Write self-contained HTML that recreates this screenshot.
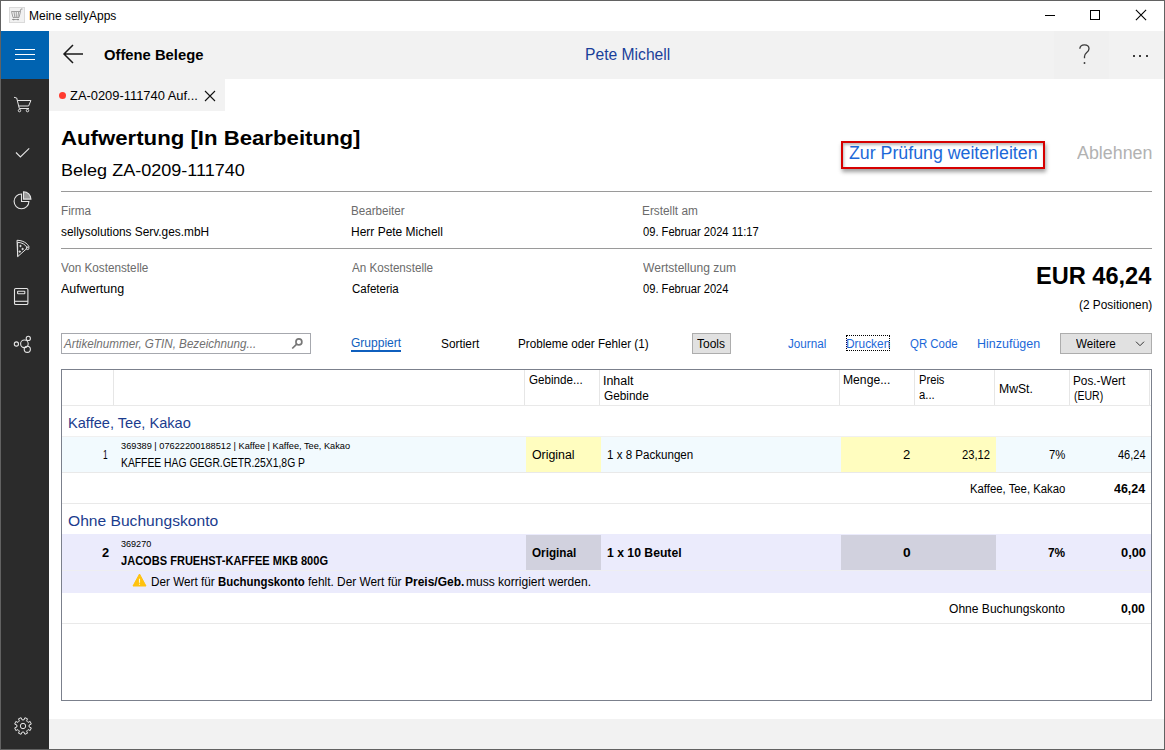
<!DOCTYPE html>
<html lang="de">
<head>
<meta charset="utf-8">
<title>Meine sellyApps</title>
<style>
*{box-sizing:border-box;margin:0;padding:0}
html,body{width:1165px;height:750px;overflow:hidden;background:#fff}
body{font-family:"Liberation Sans",sans-serif;color:#000;position:relative;font-size:12px}
.a{position:absolute;white-space:nowrap;line-height:1;transform-origin:0 0}
.x{position:absolute}
svg{position:absolute;overflow:visible}
.hl{position:absolute;height:1px;left:62px;width:1089px;background:#e9e9e9}
.vl{position:absolute;width:1px;top:370px;height:35px;background:#e6e6e6}
</style>
</head>
<body>
<!-- title bar -->
<div class="x" style="left:9px;top:7px;width:16px;height:16px;background:#f1f1f1;border:1px solid #dadada"></div>
<svg style="left:9px;top:7px" width="16" height="16" viewBox="0 0 16 16" fill="none" stroke="#8a8a8a" stroke-width="1">
 <path d="M2.5 4.5h9l-1.5 6h-6zM11 4.5l1-2.5h1.5M5 5l.8 5M7.3 5v5M9.6 5l-.6 5" stroke-width=".8"/>
 <path d="M3 12.5h7" stroke-width=".8"/><circle cx="4.7" cy="12.6" r=".8" fill="#8a8a8a" stroke="none"/><circle cx="9" cy="12.6" r=".8" fill="#8a8a8a" stroke="none"/>
</svg>
<!-- window controls -->
<div class="x" style="left:1045px;top:15px;width:10px;height:1px;background:#000"></div>
<div class="x" style="left:1090px;top:10px;width:10px;height:10px;border:1px solid #000"></div>
<svg style="left:1135px;top:9px" width="12" height="12" viewBox="0 0 12 12" stroke="#000" stroke-width="1.1" fill="none"><path d="M.9 .9l10.2 10.2M11.1 .9L.9 11.1"/></svg>

<!-- header bar -->
<div class="x" style="left:49px;top:31px;width:1115px;height:48px;background:#f2f2f2"></div>
<div class="x" style="left:1054px;top:31px;width:55px;height:48px;background:#f0f0f0"></div>
<!-- back arrow -->
<svg style="left:62px;top:44px" width="24" height="20" viewBox="0 0 24 20" stroke="#1a1a1a" stroke-width="1.5" fill="none" stroke-linejoin="miter"><path d="M21 10H2.5M11 1L2 10l9 9"/></svg>
<!-- ? and ... -->
<svg style="left:1078px;top:43px" width="14" height="22" viewBox="0 0 14 22" fill="none" stroke="#3a3a3a" stroke-width="1.3"><path d="M1.8 5.8C2 3.2 3.8 1.8 6.4 1.8c2.800 0 4.600 1.600 4.600 3.900 0 2-1.100 3-2.500 4.100C7.200 10.900 6.500 11.800 6.500 13.600v1.600"/><circle cx="6.500" cy="20" r=".95" fill="#3a3a3a" stroke="none"/></svg>
<div class="x" style="left:1132.7px;top:55.4px;width:2.1px;height:2.1px;border-radius:50%;background:#000"></div>
<div class="x" style="left:1139.4px;top:55.4px;width:2.1px;height:2.1px;border-radius:50%;background:#000"></div>
<div class="x" style="left:1145.9px;top:55.4px;width:2.1px;height:2.1px;border-radius:50%;background:#000"></div>

<!-- sidebar -->
<div class="x" style="left:1px;top:31px;width:48px;height:718px;background:#2b2b2b"></div>
<div class="x" style="left:1px;top:31px;width:48px;height:48px;background:#0063b1"></div>
<div class="x" style="left:15px;top:49px;width:20px;height:1px;background:#fff"></div>
<div class="x" style="left:15px;top:54px;width:20px;height:1px;background:#fff"></div>
<div class="x" style="left:15px;top:59px;width:20px;height:1px;background:#fff"></div>
<!-- cart -->
<svg style="left:13px;top:95px" width="20" height="18" viewBox="0 0 20 18" fill="none" stroke="#e4e4e4" stroke-width="1"><path d="M1 2.300l2.700 .7 2.600 10.500h9.700M4.500 5.500h13.400l-2.300 5.500H5.800"/><circle cx="6.500" cy="15.600" r="1.200"/><circle cx="14.500" cy="15.600" r="1.200"/></svg>
<!-- check -->
<svg style="left:14px;top:146px" width="18" height="14" viewBox="0 0 18 14" fill="none" stroke="#e4e4e4" stroke-width="1.100"><path d="M2 6.500l4.400 4.500L15.200 2.400"/></svg>
<!-- pie -->
<svg style="left:13px;top:190px" width="20" height="20" viewBox="0 0 20 20" fill="none" stroke="#e4e4e4" stroke-width="1.100"><path d="M8.500 4A7.400 7.400 0 1 0 15.900 11.500H8.500z"/><path d="M10.500 1.700a7.400 7.400 0 0 1 7.400 7.400h-7.400z" fill="#9a9a9a"/></svg>
<!-- pizza -->
<svg style="left:14px;top:238px" width="18" height="22" viewBox="0 0 18 22" fill="none" stroke="#e4e4e4" stroke-width="1"><path d="M3 2.300C8.500 2.300 13.500 5 15.300 9.300M3.600 4.300c4.400 .2 8 2.300 9.800 5.700L3.700 18.600zM3 2.300l.7 16.300"/><circle cx="6.500" cy="8" r=".7" fill="#e4e4e4"/><circle cx="8.600" cy="11" r=".7" fill="#e4e4e4"/><circle cx="5.800" cy="13.600" r=".7" fill="#e4e4e4"/><circle cx="13.600" cy="10.300" r="1.300"/></svg>
<!-- book -->
<svg style="left:13px;top:287px" width="18" height="20" viewBox="0 0 18 20" fill="none" stroke="#e4e4e4" stroke-width="1.100"><rect x="1.500" y="1.500" width="13.400" height="16" rx="1.300"/><path d="M1.500 14.300h13.400"/><rect x="4.600" y="4.300" width="7.200" height="2.500" rx=".5"/></svg>
<!-- nodes -->
<svg style="left:13px;top:335px" width="20" height="20" viewBox="0 0 20 20" fill="none" stroke="#e4e4e4" stroke-width="1.100"><circle cx="3.400" cy="9" r="2.100"/><circle cx="11.400" cy="8.800" r="3.800"/><circle cx="15.300" cy="3.400" r="2.100"/><circle cx="14.300" cy="14.300" r="3.100"/></svg>
<!-- gear -->
<svg style="left:12.5px;top:716.4px" width="20" height="20" viewBox="-10 -10 20 20" fill="none" stroke="#e4e4e4" stroke-width="1"><path d="M6.12 1.00L8.29 1.88L7.19 4.53L5.04 3.62L3.62 5.04L4.53 7.19L1.88 8.29L1.00 6.12L-1.00 6.12L-1.88 8.29L-4.53 7.19L-3.62 5.04L-5.04 3.62L-7.19 4.53L-8.29 1.88L-6.12 1.00L-6.12 -1.00L-8.29 -1.88L-7.19 -4.53L-5.04 -3.62L-3.62 -5.04L-4.53 -7.19L-1.88 -8.29L-1.00 -6.12L1.00 -6.12L1.88 -8.29L4.53 -7.19L3.62 -5.04L5.04 -3.62L7.19 -4.53L8.29 -1.88L6.12 -1.00z" stroke-linejoin="round"/><circle r="2.700"/></svg>

<!-- tab -->
<div class="x" style="left:49px;top:79px;width:176px;height:32px;background:#f2f2f2"></div>
<div class="x" style="left:59px;top:92px;width:7px;height:7px;border-radius:50%;background:#ff3b30"></div>
<svg style="left:204px;top:90px" width="12" height="12" viewBox="0 0 12 12" stroke="#111" stroke-width="1.100" fill="none"><path d="M1 1l10 10M11 1L1 11"/></svg>

<!-- red highlight box -->
<div class="x" style="left:841px;top:141px;width:204px;height:28px;border:2px solid #d60000;box-shadow:1px 3px 4px rgba(0,0,0,.38), inset 1px 2px 3px rgba(0,0,0,.28)"></div>

<!-- separator lines -->
<div class="x" style="left:61px;top:191px;width:1091px;height:1px;background:#9a9a9a"></div>
<div class="x" style="left:61px;top:248px;width:1091px;height:1px;background:#9a9a9a"></div>

<!-- toolbar -->
<div class="x" style="left:61px;top:333px;width:250px;height:21px;border:1px solid #a6a8ae;background:#fff"></div>
<svg style="left:290px;top:337px" width="14" height="14" viewBox="0 0 14 14" fill="none" stroke="#777" stroke-width="1.700"><circle cx="8.900" cy="4.900" r="2.950"/><path d="M6.700 7.100L2.200 11.500" stroke-width="1.700"/></svg>
<div class="x" style="left:351px;top:350px;width:50px;height:2px;background:#0f5fbe"></div>
<div class="x" style="left:692px;top:333px;width:39px;height:21px;border:1px solid #adadad;background:#e1e1e1"></div>
<div class="x" style="left:846px;top:335px;width:44px;height:16px;border:1px dotted #000"></div>
<div class="x" style="left:1060px;top:333px;width:92px;height:21px;border:1px solid #adadad;background:#e1e1e1"></div>
<svg style="left:1135px;top:340px" width="10" height="8" viewBox="0 0 10 8" fill="none" stroke="#333" stroke-width="1"><path d="M1 1.700l4 4 4-4"/></svg>

<!-- table -->
<div class="x" style="left:61px;top:369px;width:1091px;height:332px;border:1px solid #7b808c;background:#fff"></div>
<div class="vl" style="left:113px"></div><div class="vl" style="left:524px"></div><div class="vl" style="left:599px"></div>
<div class="vl" style="left:839px"></div><div class="vl" style="left:914px"></div><div class="vl" style="left:994px"></div>
<div class="vl" style="left:1069px"></div><div class="vl" style="left:1149px"></div>
<div class="hl" style="top:405px"></div>
<div class="hl" style="top:436px;background:#f0f0f0"></div>
<div class="x" style="left:62px;top:437px;width:1089px;height:35px;background:#f2fafe"></div>
<div class="x" style="left:526px;top:437px;width:75px;height:35px;background:#fffdbf"></div>
<div class="x" style="left:841px;top:437px;width:155px;height:35px;background:#fffdbf"></div>
<div class="hl" style="top:472px"></div>
<div class="hl" style="top:503px"></div>
<div class="x" style="left:62px;top:534px;width:1089px;height:59px;background:#ebebfc"></div>
<div class="x" style="left:62px;top:570px;width:1089px;height:1px;background:#eeeef1"></div>
<div class="x" style="left:526px;top:535px;width:75px;height:35px;background:#d1d1de"></div>
<div class="x" style="left:841px;top:535px;width:155px;height:35px;background:#d1d1de"></div>
<div class="hl" style="top:623px"></div>
<!-- warning icon -->
<svg style="left:132px;top:573px" width="15" height="14" viewBox="0 0 15 14" fill="none"><path d="M7.500 1L14 13H1z" fill="#ffc20e" stroke="#ffc20e" stroke-width="1" stroke-linejoin="round"/><path d="M7.500 5.800v4M7.500 10.800v1" stroke="#fff6d5" stroke-width="1.100"/></svg>

<!-- bottom bar -->
<div class="x" style="left:49px;top:719px;width:1115px;height:30px;background:#f2f2f2"></div>

<div class="a" id="t_title" style="left:29.05px;top:10.00px;font-size:12px;color:#000;transform:scaleX(0.9997)">Meine sellyApps</div>
<div class="a" id="t_offene" style="left:103.94px;top:47.00px;font-size:15px;color:#000;transform:scaleX(0.9858);font-weight:bold">Offene Belege</div>
<div class="a" id="t_pete" style="left:585.38px;top:46.50px;font-size:16px;color:#1a3f9a;transform:scaleX(0.9783)">Pete Michell</div>
<div class="a" id="t_tab" style="left:69.60px;top:89.00px;font-size:13px;color:#000;transform:scaleX(0.9920)">ZA-0209-111740 Auf...</div>
<div class="a" id="t_h1" style="left:61.25px;top:128.40px;font-size:20px;color:#000;transform:scaleX(1.1093);font-weight:bold">Aufwertung [In Bearbeitung]</div>
<div class="a" id="t_h2" style="left:60.99px;top:161.75px;font-size:16.5px;color:#000;transform:scaleX(1.0933)">Beleg ZA-0209-111740</div>
<div class="a" id="t_zur" style="left:848.84px;top:143.60px;font-size:18px;color:#1b68d8;transform:scaleX(0.9867)">Zur Prüfung weiterleiten</div>
<div class="a" id="t_abl" style="left:1077.00px;top:143.60px;font-size:18px;color:#b2b2b2;transform:scaleX(0.9912)">Ablehnen</div>
<div class="a" id="t_firma" style="left:60.67px;top:205.00px;font-size:12px;color:#6b6b6b;transform:scaleX(0.9752)">Firma</div>
<div class="a" id="t_firmav" style="left:60.90px;top:226.00px;font-size:12px;color:#000;transform:scaleX(0.9881)">sellysolutions Serv.ges.mbH</div>
<div class="a" id="t_bearb" style="left:351.48px;top:205.00px;font-size:12px;color:#6b6b6b;transform:scaleX(0.9701)">Bearbeiter</div>
<div class="a" id="t_bearbv" style="left:351.45px;top:226.00px;font-size:12px;color:#000;transform:scaleX(0.9988)">Herr Pete Michell</div>
<div class="a" id="t_erst" style="left:642.46px;top:205.00px;font-size:12px;color:#6b6b6b;transform:scaleX(0.9858)">Erstellt am</div>
<div class="a" id="t_erstv" style="left:642.78px;top:226.00px;font-size:12px;color:#000;transform:scaleX(0.9295)">09. Februar 2024 11:17</div>
<div class="a" id="t_von" style="left:61.15px;top:262.00px;font-size:12px;color:#6b6b6b;transform:scaleX(0.9772)">Von Kostenstelle</div>
<div class="a" id="t_vonv" style="left:61.20px;top:283.00px;font-size:12px;color:#000;transform:scaleX(1.0404)">Aufwertung</div>
<div class="a" id="t_an" style="left:352.40px;top:262.00px;font-size:12px;color:#6b6b6b;transform:scaleX(0.9727)">An Kostenstelle</div>
<div class="a" id="t_anv" style="left:351.82px;top:283.00px;font-size:12px;color:#000;transform:scaleX(0.9601)">Cafeteria</div>
<div class="a" id="t_wert" style="left:643.35px;top:262.00px;font-size:12px;color:#6b6b6b;transform:scaleX(1.0056)">Wertstellung zum</div>
<div class="a" id="t_wertv" style="left:642.78px;top:283.00px;font-size:12px;color:#000;transform:scaleX(0.9289)">09. Februar 2024</div>
<div class="a" id="t_eur" style="left:1035.93px;top:265.10px;font-size:23px;color:#000;transform:scaleX(1.0250);font-weight:bold">EUR 46,24</div>
<div class="a" id="t_pos" style="left:1078.91px;top:299.20px;font-size:12px;color:#000;transform:scaleX(0.9884)">(2 Positionen)</div>
<div class="a" id="t_search" style="left:64.28px;top:338.00px;font-size:12px;color:#707070;transform:scaleX(0.9699);font-style:italic">Artikelnummer, GTIN, Bezeichnung...</div>
<div class="a" id="t_grp" style="left:351.00px;top:337.00px;font-size:12px;color:#0f5fbe;transform:scaleX(1.0013)">Gruppiert</div>
<div class="a" id="t_sort" style="left:440.51px;top:338.00px;font-size:12px;color:#000;transform:scaleX(0.9870)">Sortiert</div>
<div class="a" id="t_prob" style="left:518.47px;top:338.00px;font-size:12px;color:#000;transform:scaleX(0.9742)">Probleme oder Fehler (1)</div>
<div class="a" id="t_tools" style="left:697.35px;top:338.00px;font-size:12px;color:#000;transform:scaleX(1.0013)">Tools</div>
<div class="a" id="t_jour" style="left:787.85px;top:338.00px;font-size:12px;color:#1b68d8;transform:scaleX(0.9729)">Journal</div>
<div class="a" id="t_druck" style="left:845.86px;top:338.00px;font-size:12px;color:#1b68d8;transform:scaleX(0.9916)">Drucken</div>
<div class="a" id="t_qr" style="left:909.88px;top:338.00px;font-size:12px;color:#1b68d8;transform:scaleX(0.9520)">QR Code</div>
<div class="a" id="t_hinzu" style="left:976.61px;top:338.00px;font-size:12px;color:#1b68d8;transform:scaleX(1.0409)">Hinzufügen</div>
<div class="a" id="t_weit" style="left:1076.35px;top:338.00px;font-size:12px;color:#000;transform:scaleX(0.9666)">Weitere</div>
<div class="a" id="t_hgeb" style="left:529.02px;top:374.00px;font-size:12px;color:#000;transform:scaleX(0.9686)">Gebinde...</div>
<div class="a" id="t_hinh" style="left:603.26px;top:375.00px;font-size:12px;color:#000;transform:scaleX(1.0365)">Inhalt</div>
<div class="a" id="t_hinh2" style="left:603.81px;top:390.40px;font-size:12px;color:#000;transform:scaleX(0.9854)">Gebinde</div>
<div class="a" id="t_hmen" style="left:843.44px;top:374.00px;font-size:12px;color:#000;transform:scaleX(1.0121)">Menge...</div>
<div class="a" id="t_hpre" style="left:918.52px;top:374.00px;font-size:12px;color:#000;transform:scaleX(0.9311)">Preis</div>
<div class="a" id="t_hpre2" style="left:918.93px;top:389.40px;font-size:12px;color:#000;transform:scaleX(0.9409)">a...</div>
<div class="a" id="t_hmw" style="left:998.63px;top:383.00px;font-size:12px;color:#000;transform:scaleX(1.0160)">MwSt.</div>
<div class="a" id="t_hpos" style="left:1073.47px;top:375.00px;font-size:12px;color:#000;transform:scaleX(0.9830)">Pos.-Wert</div>
<div class="a" id="t_hpos2" style="left:1073.79px;top:390.40px;font-size:12px;color:#000;transform:scaleX(0.8769)">(EUR)</div>
<div class="a" id="t_g1" style="left:68.06px;top:414.60px;font-size:15px;color:#1b3c8e;transform:scaleX(0.9735)">Kaffee, Tee, Kakao</div>
<div class="a" id="t_r1n" style="left:103.38px;top:449.00px;font-size:12px;color:#000;transform:scaleX(0.6923)">1</div>
<div class="a" id="t_r1s" style="left:121.09px;top:441.50px;font-size:9px;color:#000;transform:scaleX(1.0241)">369389 | 07622200188512 | Kaffee | Kaffee, Tee, Kakao</div>
<div class="a" id="t_r1t" style="left:120.58px;top:457.00px;font-size:12px;color:#000;transform:scaleX(0.8620)">KAFFEE HAG GEGR.GETR.25X1,8G P</div>
<div class="a" id="t_r1o" style="left:531.83px;top:449.00px;font-size:12px;color:#000;transform:scaleX(1.0291)">Original</div>
<div class="a" id="t_r1i" style="left:607.13px;top:449.00px;font-size:12px;color:#000;transform:scaleX(0.9644)">1 x 8 Packungen</div>
<div class="a" id="t_r1m" style="left:903.35px;top:449.00px;font-size:12px;color:#000;transform:scaleX(1.0909)">2</div>
<div class="a" id="t_r1p" style="left:962.44px;top:449.00px;font-size:12px;color:#000;transform:scaleX(0.9357)">23,12</div>
<div class="a" id="t_r1w" style="left:1049.03px;top:449.00px;font-size:12px;color:#000;transform:scaleX(0.9434)">7%</div>
<div class="a" id="t_r1v" style="left:1117.77px;top:449.00px;font-size:12px;color:#000;transform:scaleX(0.9166)">46,24</div>
<div class="a" id="t_s1l" style="left:969.50px;top:483.00px;font-size:12px;color:#000;transform:scaleX(0.9442)">Kaffee, Tee, Kakao</div>
<div class="a" id="t_s1v" style="left:1113.84px;top:483.00px;font-size:12px;color:#000;transform:scaleX(1.0383);font-weight:bold">46,24</div>
<div class="a" id="t_g2" style="left:68.47px;top:512.60px;font-size:15px;color:#1b3c8e;transform:scaleX(1.0408)">Ohne Buchungskonto</div>
<div class="a" id="t_r2n" style="left:101.97px;top:547.00px;font-size:12px;color:#000;transform:scaleX(1.0690);font-weight:bold">2</div>
<div class="a" id="t_r2s" style="left:121.10px;top:539.50px;font-size:9px;color:#000;transform:scaleX(1.0059)">369270</div>
<div class="a" id="t_r2t" style="left:121.26px;top:555.00px;font-size:12px;color:#000;transform:scaleX(0.9213);font-weight:bold">JACOBS FRUEHST-KAFFEE MKB 800G</div>
<div class="a" id="t_r2o" style="left:531.56px;top:547.00px;font-size:12px;color:#000;transform:scaleX(0.9760);font-weight:bold">Original</div>
<div class="a" id="t_r2i" style="left:607.24px;top:547.00px;font-size:12px;color:#000;transform:scaleX(1.0169);font-weight:bold">1 x 10 Beutel</div>
<div class="a" id="t_r2m" style="left:902.88px;top:547.00px;font-size:12px;color:#000;transform:scaleX(1.1478);font-weight:bold">0</div>
<div class="a" id="t_r2w" style="left:1048.11px;top:547.00px;font-size:12px;color:#000;transform:scaleX(0.9895);font-weight:bold">7%</div>
<div class="a" id="t_r2v" style="left:1120.52px;top:547.00px;font-size:12px;color:#000;transform:scaleX(1.0699);font-weight:bold">0,00</div>
<div class="a" id="t_w1" style="left:151.07px;top:576.00px;font-size:12px;color:#000;transform:scaleX(0.9769)">Der Wert für</div>
<div class="a" id="t_w2" style="left:217.94px;top:576.00px;font-size:12px;color:#000;transform:scaleX(0.9501);font-weight:bold">Buchungskonto</div>
<div class="a" id="t_w3" style="left:308.05px;top:576.00px;font-size:12px;color:#000;transform:scaleX(0.9902)">fehlt. Der Wert für</div>
<div class="a" id="t_w4" style="left:404.50px;top:576.00px;font-size:12px;color:#000;transform:scaleX(0.9987);font-weight:bold">Preis/Geb.</div>
<div class="a" id="t_w5" style="left:465.65px;top:576.00px;font-size:12px;color:#000;transform:scaleX(1.0027)">muss korrigiert werden.</div>
<div class="a" id="t_s2l" style="left:949.05px;top:603.00px;font-size:12px;color:#000;transform:scaleX(1.0053)">Ohne Buchungskonto</div>
<div class="a" id="t_s2v" style="left:1120.94px;top:603.00px;font-size:12px;color:#000;transform:scaleX(1.0253);font-weight:bold">0,00</div>

<!-- window frame (on top) -->
<div class="x" style="left:0;top:0;width:1165px;height:750px;border:1px solid #626262;pointer-events:none"></div>
</body>
</html>
